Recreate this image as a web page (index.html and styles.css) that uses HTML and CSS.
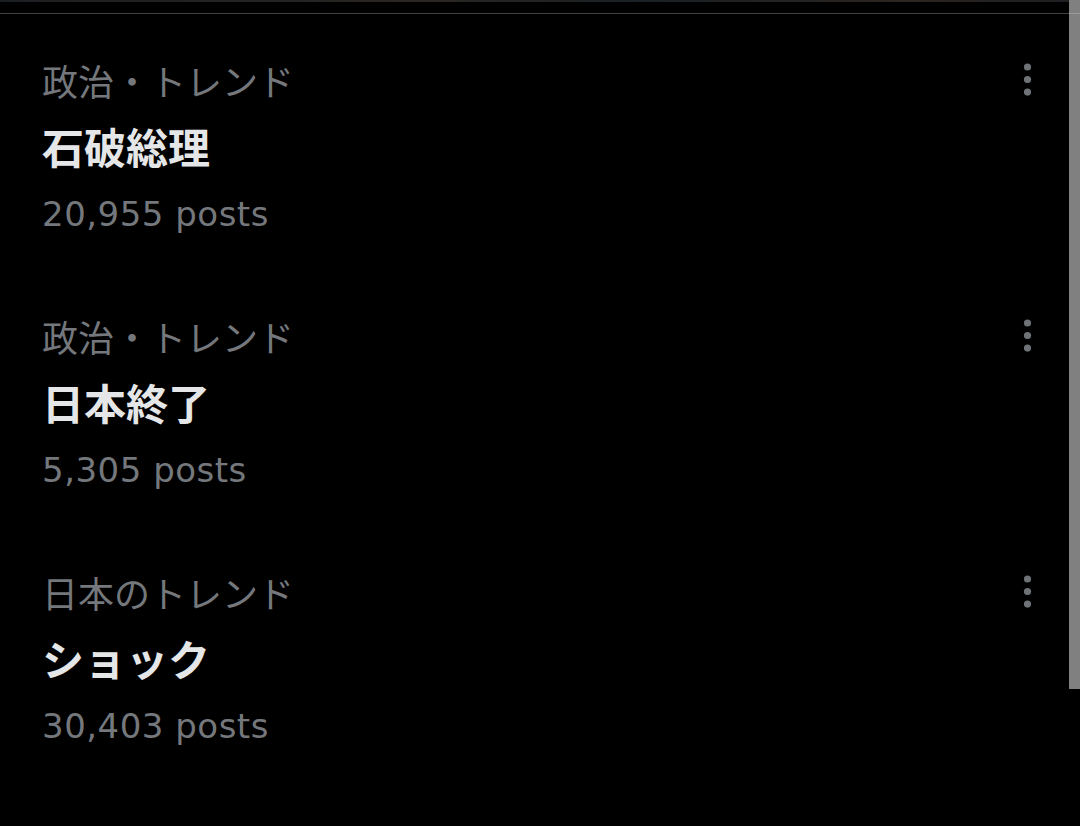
FILE: index.html
```html
<!doctype html>
<html lang="ja">
<head>
    <meta charset="UTF-8">
    <meta name="viewport" content="width=device-width, initial-scale=1.0">
    <title>トレンド</title>
    <link rel="stylesheet" href="styles.css">
</head>
<body>
    <div class="page">
        <div class="feed">
            <div class="banner"></div>
            <div class="divider"></div>

            <div class="trend">
                <div class="trend-head">
                    <span class="trend-meta">政治・トレンド</span>
                    <svg class="more" viewBox="0 0 24 24"><circle cx="12" cy="5" r="2"/><circle cx="12" cy="12" r="2"/><circle cx="12" cy="19" r="2"/></svg>
                </div>
                <div class="trend-title">石破総理</div>
                <div class="trend-count">20,955 posts</div>
            </div>

            <div class="trend">
                <div class="trend-head">
                    <span class="trend-meta">政治・トレンド</span>
                    <svg class="more" viewBox="0 0 24 24"><circle cx="12" cy="5" r="2"/><circle cx="12" cy="12" r="2"/><circle cx="12" cy="19" r="2"/></svg>
                </div>
                <div class="trend-title">日本終了</div>
                <div class="trend-count">5,305 posts</div>
            </div>

            <div class="trend">
                <div class="trend-head">
                    <span class="trend-meta">日本のトレンド</span>
                    <svg class="more" viewBox="0 0 24 24"><circle cx="12" cy="5" r="2"/><circle cx="12" cy="12" r="2"/><circle cx="12" cy="19" r="2"/></svg>
                </div>
                <div class="trend-title">ショック</div>
                <div class="trend-count">30,403 posts</div>
            </div>
        </div>
        <div class="scrollbar">
            <div class="thumb"></div>
        </div>
    </div>
</body>
</html>
```

FILE: styles.css
```css
html, body {
    margin: 0;
    height: 100%;
    background: #000;
}
body {
    font-family: "Noto Sans CJK JP", sans-serif;
    color: #e7e9ea;
    overflow: hidden;
}
.page {
    display: flex;
    height: 826px;
}
.feed {
    flex: 1;
}
.banner {
    height: 2px;
    background: linear-gradient(90deg, #1c1f22 0%, #2a2622 40%, #1a2024 60%, #2c2520 85%, #1c1f22 100%);
}
.divider {
    height: 1px;
    margin-top: 11px;
    background: #3e4245;
}
.trend {
    padding: 36px 20px 24px 42px;
}
.trend-head {
    display: flex;
    align-items: center;
    justify-content: space-between;
    height: 60px;
}
.trend-meta {
    font-size: 36px;
    line-height: 60px;
    color: #74787c;
}
.more {
    width: 43px;
    height: 43px;
    fill: #6f7377;
    margin-bottom: 1px;
}
.trend-title {
    font-size: 42px;
    font-weight: 700;
    line-height: 72px;
    color: #e4e6e7;
}
.trend-count {
    font-family: "DejaVu Sans", "Noto Sans CJK JP", sans-serif;
    font-size: 34px;
    letter-spacing: 0.5px;
    line-height: 64px;
    color: #74787c;
}
.scrollbar {
    width: 11px;
    position: relative;
}
.thumb {
    height: 689px;
    background: #808080;
}
.scrollbar::after {
    content: "";
    position: absolute;
    left: 0;
    right: 0;
    top: 13px;
    height: 1px;
    background: #9a9a9a;
}
```
